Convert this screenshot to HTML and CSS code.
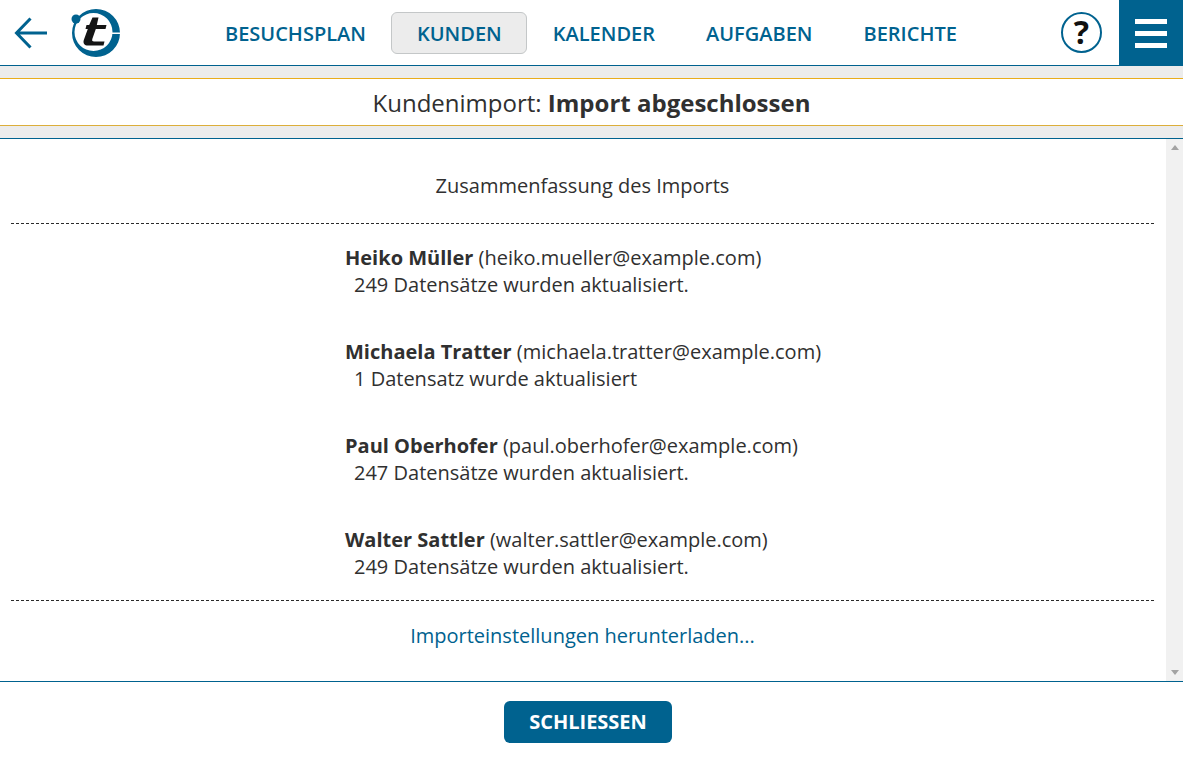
FILE: index.html
```html
<!DOCTYPE html>
<html lang="de">
<head>
<meta charset="utf-8">
<title>Kundenimport</title>
<link rel="stylesheet" href="styles.css">
</head>
<body>
<header class="topbar">
  <div class="brand">
    <svg class="back" width="36" height="34" viewBox="0 0 36 34"><path d="M33 17H3.500M16.500 2.500L2.500 17L16.500 31.500" fill="none" stroke="#00628f" stroke-width="3"/></svg>
    <svg class="logo" width="52" height="52" viewBox="70 7 52 52">
      <path fill-rule="evenodd" fill="#00628f" d="M120 33A24 24 0 1 1 72 33A24 24 0 1 1 120 33ZM112.500 32A19 19 0 1 0 74.500 32A19 19 0 1 0 112.500 32Z"/>
      <rect x="110" y="32.500" width="11" height="1.500" fill="#fff"/>
      <circle cx="76" cy="19" r="4.500" fill="#00628f"/>
      <path fill="#151515" d="M92.500 17.500H98.500L96.800 25H106.500L105.500 29H95.800L92.300 39C91.800 40.800 92.500 41.500 94 41.500H104.500L103.500 45.500H88C84.500 45.500 82.800 43.500 83.800 40L87.800 29H85.500L86.500 25H89.200Z"/>
    </svg>
  </div>
  <nav class="nav">
    <a class="nav-item">BESUCHSPLAN</a>
    <a class="nav-item active">KUNDEN</a>
    <a class="nav-item">KALENDER</a>
    <a class="nav-item">AUFGABEN</a>
    <a class="nav-item">BERICHTE</a>
  </nav>
  <div class="tools">
    <div class="help">?</div>
    <div class="menu"><span></span><span></span><span></span></div>
  </div>
</header>
<div class="band"></div>
<h1 class="title">Kundenimport: <strong>Import abgeschlossen</strong></h1>
<div class="band band-bottom"></div>
<main class="content">
  <div class="scroll-area">
    <p class="summary">Zusammenfassung des Imports</p>
    <div class="people">
      <div class="person"><div><b>Heiko Müller</b> (heiko.mueller@example.com)</div><div class="detail">249 Datensätze wurden aktualisiert.</div></div>
      <div class="person"><div><b>Michaela Tratter</b> (michaela.tratter@example.com)</div><div class="detail">1 Datensatz wurde aktualisiert</div></div>
      <div class="person"><div><b>Paul Oberhofer</b> (paul.oberhofer@example.com)</div><div class="detail">247 Datensätze wurden aktualisiert.</div></div>
      <div class="person"><div><b>Walter Sattler</b> (walter.sattler@example.com)</div><div class="detail">249 Datensätze wurden aktualisiert.</div></div>
    </div>
    <a class="download">Importeinstellungen herunterladen...</a>
  </div>
  <div class="scrollbar"><i class="arrow up"></i><i class="arrow down"></i></div>
</main>
<footer class="footer"><button class="close">SCHLIESSEN</button></footer>
</body>
</html>
```
FILE: styles.css
```css
* { box-sizing: border-box; }
html, body { margin: 0; height: 100%; }
body {
  width: 1183px;
  height: 761px;
  overflow: hidden;
  background: #fff;
  color: #303030;
  font-family: "Open Sans", "Liberation Sans", sans-serif;
  font-size: 20px;
  display: flex;
  flex-direction: column;
}
.topbar {
  height: 66px;
  flex: none;
  display: flex;
  border-bottom: 1px solid #00628f;
}
.brand { width: 175px; flex: none; display: flex; align-items: flex-start; }
.back { margin: 16px 0 0 14px; }
.logo { margin: 7px 0 0 20px; }
.nav { flex: 1; display: flex; align-items: center; padding: 0 0 0 24.500px; height: 65px; }
.nav-item {
  color: #00628f;
  font-size: 20px;
  font-weight: 600;
  line-height: 41px;
  padding: 0 24.500px;
  height: 42px;
  border: 1px solid transparent;
  border-radius: 6px;
}
.active { background: #ececec; border-color: #c4c7c8; }
.tools { display: flex; align-items: flex-start; }
.help {
  width: 41px;
  height: 41px;
  margin: 12px 17px 0 0;
  border: 2px solid #00628f;
  border-radius: 50%;
  color: #111;
  font-size: 32px;
  font-weight: 700;
  line-height: 36px;
  text-align: center;
}
.menu {
  width: 64px;
  height: 65px;
  background: #00628f;
  display: flex;
  flex-direction: column;
  gap: 7px;
  padding: 19px 16px 0;
}
.menu span { display: block; height: 5px; background: #fff; }
.band { height: 13px; flex: none; background: #ececec; border-bottom: 1px solid #e9ad1d; }
.band-bottom { border-bottom: 1px solid #00628f; border-top: 1px solid #dcae3a; height: 14px; }
.title {
  height: 46px;
  flex: none;
  margin: 0;
  font-size: 24px;
  font-weight: 400;
  line-height: 48px;
  text-align: center;
}
.title strong { font-weight: 700; }
.content { flex: none; height: 543px; display: flex; border-bottom: 1px solid #00628f; }
.scroll-area { flex: 1; padding: 0 12px 0 11px; display: flex; flex-direction: column; }
.summary {
  margin: 0;
  height: 85px;
  padding-top: 33px;
  line-height: 27px;
  text-align: center;
  border-bottom: 1px dashed #2b2b2b;
}
.people {
  height: 377px;
  padding: 20px 0 0 334px;
  line-height: 27px;
  border-bottom: 1px dashed #2b2b2b;
  display: flex;
  flex-direction: column;
  gap: 40px;
}
.person b { font-weight: 700; }
.detail { padding-left: 9px; }
.download { color: #00628f; text-align: center; line-height: 27px; padding-top: 21px; }
.scrollbar {
  width: 17px;
  flex: none;
  background: #f1f1f1;
  display: flex;
  flex-direction: column;
  justify-content: space-between;
  align-items: center;
  padding: 6px 0;
}
.arrow { width: 0; height: 0; border-left: 4px solid transparent; border-right: 4px solid transparent; }
.up { border-bottom: 5px solid #a3a3a3; }
.down { border-top: 5px solid #a3a3a3; }
.footer { flex: 1; display: flex; justify-content: center; padding: 19px 7px 0 0; }
.close {
  width: 168px;
  height: 42px;
  background: #00628f;
  border: 0;
  border-radius: 6px;
  color: #fff;
  font-family: inherit;
  font-size: 20px;
  font-weight: 700;
  padding: 0 0 2px;
}
```
